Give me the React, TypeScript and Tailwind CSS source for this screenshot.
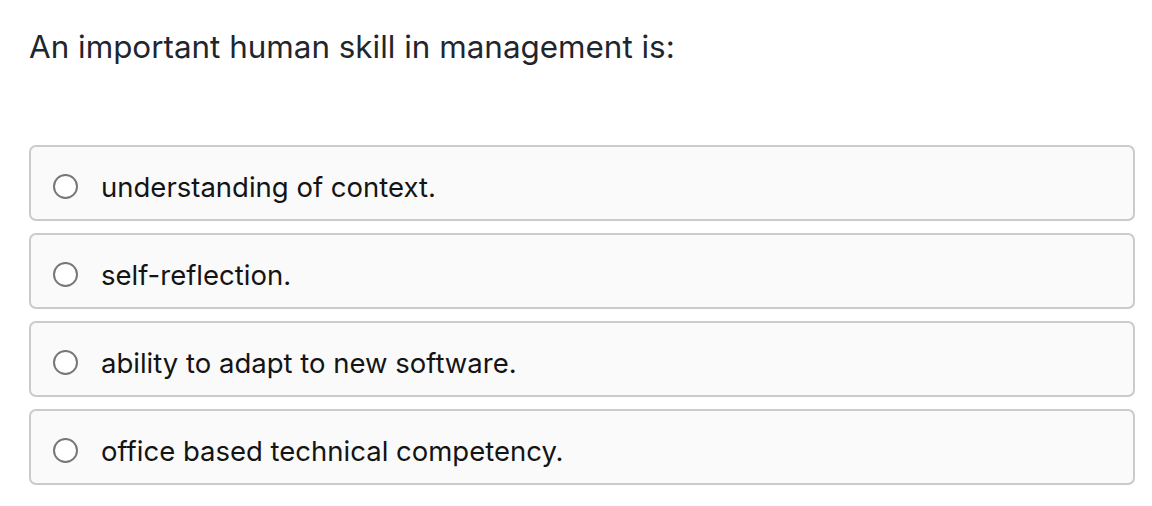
import React from "react";

const options = [
  "understanding of context.",
  "self-reflection.",
  "ability to adapt to new software.",
  "office based technical competency.",
];

export default function App() {
  return (
    <div className="w-[1152px] h-[506px] bg-white pl-[29px] pr-[17px] pt-[28px]" style={{ fontFamily: "Inter, 'Noto Sans', sans-serif" }}>
      <h1 className="text-[31.4px] leading-[38px] text-[#1f262e] font-normal">
        An important human skill in management is:
      </h1>
      <div className="mt-[79px] flex flex-col gap-[12px]">
        {options.map((o) => (
          <div key={o} className="h-[76px] rounded-[7px] border-2 border-[#cbcbcb] bg-[#fafafa] flex items-center pl-[22px] pt-[8px]">
            <span className="w-[25px] h-[25px] rounded-full border-2 border-[#777777] bg-white shrink-0 mt-[-1px]" />
            <span className="ml-[23px] text-[27.5px] leading-[34px] text-[#141414]">{o}</span>
          </div>
        ))}
      </div>
    </div>
  );
}
